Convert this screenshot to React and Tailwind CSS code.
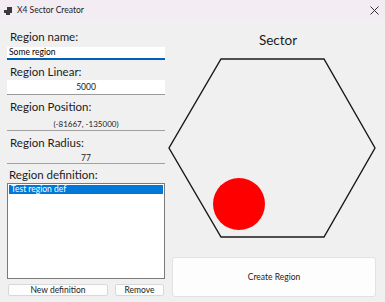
import React from "react";

export default function App() {
  const font = { fontFamily: 'Lato, "Noto Sans", sans-serif' };
  return (
    <div className="w-[385px] h-[302px] bg-[#f0f0f0] overflow-hidden text-[#1b1b1b]" style={font}>
      {/* title bar */}
      <div className="h-[21px] bg-[#f4ecf3] flex items-center relative">
        <svg className="ml-[4px]" width="8" height="8" viewBox="0 0 8 8">
          <rect x="0" y="3" width="3" height="3" fill="#3a3a3a" />
          <rect x="3" y="0" width="5" height="6" fill="#3a3a3a" />
          <rect x="2" y="6" width="4" height="2" fill="#3a3a3a" />
        </svg>
        <span className="ml-[5px] text-[8.5px] leading-none text-[#222]">X4 Sector Creator</span>
        <svg className="absolute left-[370px] top-[6px]" width="9" height="9" viewBox="0 0 9 9">
          <path d="M0.5 0.5 L8.5 8.5 M8.5 0.5 L0.5 8.5" stroke="#333" strokeWidth="1" />
        </svg>
      </div>
      <div className="flex">
        {/* left column */}
        <div className="w-[158px] ml-[7px] flex flex-col">
          <div className="h-[26px] flex items-center pl-[3px] pt-[6px] text-[11.5px] leading-none">Region name:</div>
          <div className="h-[13px] bg-white border-b-2 border-[#005fb8] flex items-center pl-[2px] text-[8.5px] leading-none text-black">Some region</div>
          <div className="h-[20px] flex items-center pl-[3px] pt-[3px] text-[11.5px] leading-none">Region Linear:</div>
          <div className="h-[15px] bg-white border-b border-[#9a9a9a] flex items-center justify-center text-[8.5px] leading-none">5000</div>
          <div className="h-[22px] flex items-center pl-[3px] pt-[2px] text-[11.5px] leading-none">Region Position:</div>
          <div className="h-[14px] border-b border-[#a0a0a0] flex items-center justify-center text-[8px] leading-none">(-81667, -135000)</div>
          <div className="h-[22px] flex items-center pl-[3px] pt-[2px] text-[11.5px] leading-none">Region Radius:</div>
          <div className="h-[11px] border-b border-[#a0a0a0] flex items-center justify-center text-[8.5px] leading-none">77</div>
          <div className="h-[19px] flex items-center pl-[2px] pt-[3px] text-[11.5px] leading-none">Region definition:</div>
          <div className="h-[96px] bg-white border border-[#7a7a7a] p-[1px]">
            <div className="h-[9px] bg-[#0078d7] text-white text-[8.5px] leading-none flex items-center pl-[2px]">Test region def</div>
          </div>
          <div className="flex mt-[5px] ml-[1px]">
            <div className="w-[100px] h-[12px] bg-[#fdfdfd] border border-[#d8d8d8] rounded-[2px] flex items-center justify-center text-[8.5px] leading-none">New definition</div>
            <div className="w-[49px] h-[12px] ml-[7px] bg-[#fdfdfd] border border-[#d8d8d8] rounded-[2px] flex items-center justify-center text-[8.5px] leading-none">Remove</div>
          </div>
        </div>
        {/* right column */}
        <div className="flex-1 flex flex-col relative">
          <div className="h-[26px] flex items-end justify-center pl-[6px] text-[13.5px] leading-none">Sector</div>
          <svg className="absolute left-0 top-0" width="220" height="230" viewBox="165 21 220 230">
            <polygon points="221,59 324,59 375,148 324,237 221,237 169,148" fill="none" stroke="#1a1a1a" strokeWidth="1.4" />
            <circle cx="239" cy="204" r="26" fill="#ff0000" />
          </svg>
          <div className="mt-[210px] ml-[7px] w-[204px] h-[40px] bg-[#fdfdfd] border border-[#e2e2e2] rounded-[3px] flex items-center justify-center text-[8.5px] leading-none">Create Region</div>
        </div>
      </div>
    </div>
  );
}
